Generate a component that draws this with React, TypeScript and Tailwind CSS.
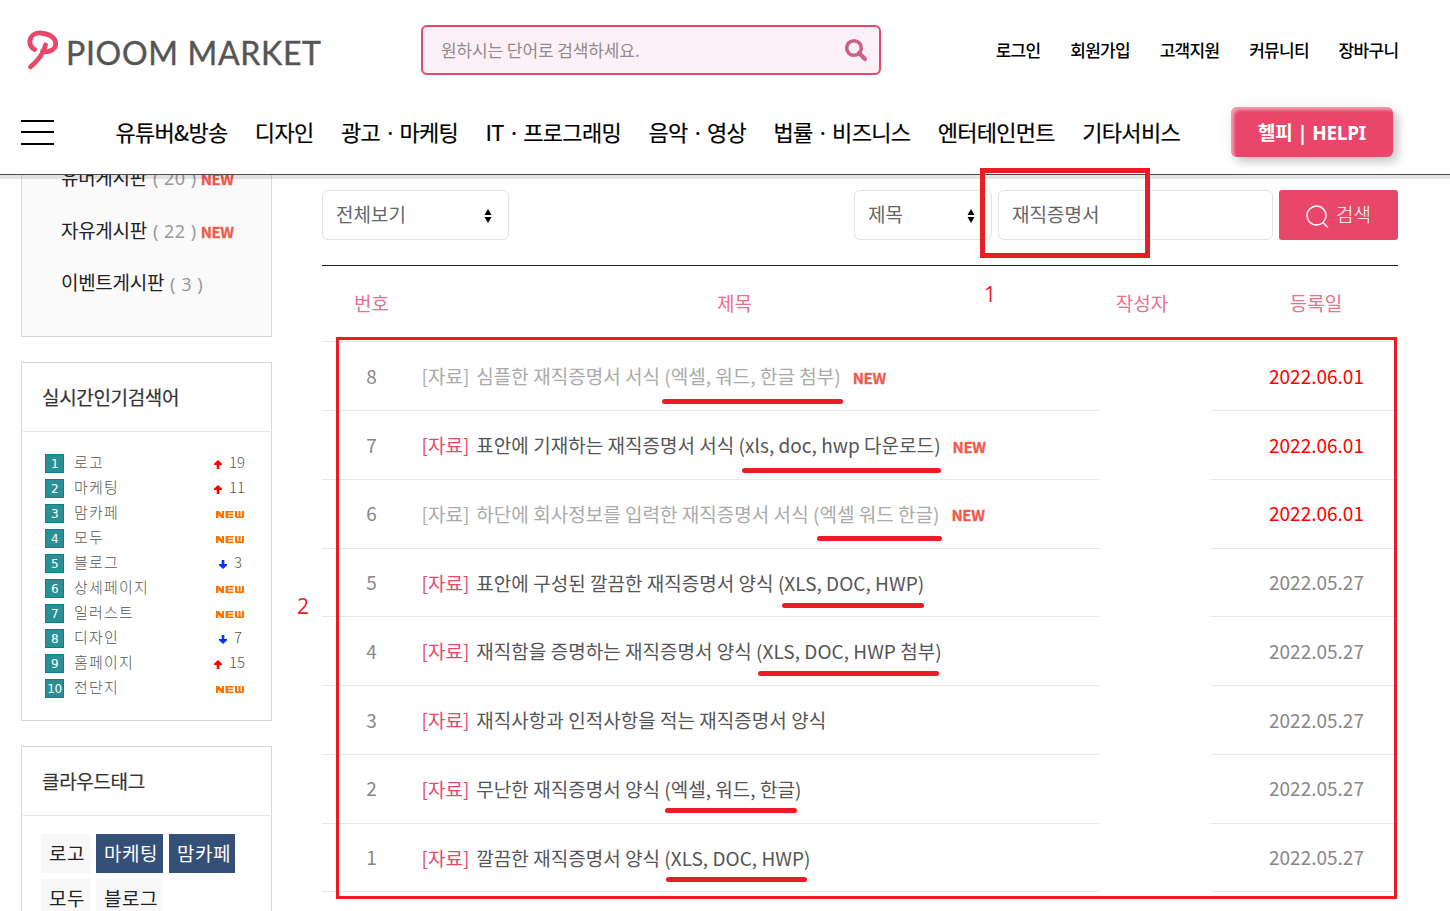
import { clsx } from "clsx";

const topLinks = ["로그인", "회원가입", "고객지원", "커뮤니티", "장바구니"];

const navItems = [
  "유튜버&방송",
  "디자인",
  "광고ㆍ마케팅",
  "ITㆍ프로그래밍",
  "음악ㆍ영상",
  "법률ㆍ비즈니스",
  "엔터테인먼트",
  "기타서비스",
];

const boards = [
  { name: "유머게시판", count: 20, isNew: true },
  { name: "자유게시판", count: 22, isNew: true },
  { name: "이벤트게시판", count: 3, isNew: false },
];

type Keyword = { word: string; trend: "up" | "down" | "new"; diff?: number };

const keywords: Keyword[] = [
  { word: "로고", trend: "up", diff: 19 },
  { word: "마케팅", trend: "up", diff: 11 },
  { word: "맘카페", trend: "new" },
  { word: "모두", trend: "new" },
  { word: "블로그", trend: "down", diff: 3 },
  { word: "상세페이지", trend: "new" },
  { word: "일러스트", trend: "new" },
  { word: "디자인", trend: "down", diff: 7 },
  { word: "홈페이지", trend: "up", diff: 15 },
  { word: "전단지", trend: "new" },
];

const tags = [
  { label: "로고", active: false, width: "w-[49px]" },
  { label: "마케팅", active: true, width: "w-[67px]" },
  { label: "맘카페", active: true, width: "w-[66px]" },
  { label: "모두", active: false, width: "w-[49px]" },
  { label: "블로그", active: false, width: "w-[67px]" },
];

const posts = [
  { no: 8, title: "심플한 재직증명서 서식 (엑셀, 워드, 한글 첨부)", date: "2022.06.01", isNew: true, visited: true },
  { no: 7, title: "표안에 기재하는 재직증명서 서식 (xls, doc, hwp 다운로드)", date: "2022.06.01", isNew: true, visited: false },
  { no: 6, title: "하단에 회사정보를 입력한 재직증명서 서식 (엑셀 워드 한글)", date: "2022.06.01", isNew: true, visited: true },
  { no: 5, title: "표안에 구성된 깔끔한 재직증명서 양식 (XLS, DOC, HWP)", date: "2022.05.27", isNew: false, visited: false },
  { no: 4, title: "재직함을 증명하는 재직증명서 양식 (XLS, DOC, HWP 첨부)", date: "2022.05.27", isNew: false, visited: false },
  { no: 3, title: "재직사항과 인적사항을 적는 재직증명서 양식", date: "2022.05.27", isNew: false, visited: false },
  { no: 2, title: "무난한 재직증명서 양식 (엑셀, 워드, 한글)", date: "2022.05.27", isNew: false, visited: false },
  { no: 1, title: "깔끔한 재직증명서 양식 (XLS, DOC, HWP)", date: "2022.05.27", isNew: false, visited: false },
];

const Header = () => (
  <header className="relative z-10 h-[175px] border-b border-[#4d4d4d] bg-white shadow-[0_4px_0_rgba(0,0,0,0.1)]">
    <div className="flex h-[100px] items-center pr-[51.500px] pl-[27px]">
      <a className="flex w-[394px] items-center">
        <svg className="h-[42px] w-[32px]" viewBox="0 0 32 42" fill="none" stroke="#e8476a" strokeWidth="4.8" strokeLinecap="round" strokeLinejoin="round">
          <path d="M7.500 20.500C3.500 18 2.500 14.500 3 11.500C4 6 9 3.700 13.500 4C22 4.500 29 8.500 28.700 15C28.500 21 22 23.500 15.500 22.500" />
          <path d="M18.500 16C16.500 25 10.500 32 3.500 38" />
        </svg>
        <span className="mt-[6px] ml-[7px] font-['Lato'] text-[32px] leading-none tracking-[0.700px] whitespace-nowrap text-[#555] [-webkit-text-stroke:0.4px_#555]">PIOOM MARKET</span>
      </a>
      <div className="flex h-[50px] w-[460px] items-center justify-between rounded-md border-2 border-[#e8476a] bg-[#fdf0f7] pr-[11px] pl-[18px]">
        <span className="text-[17px] tracking-[-0.100px] text-[#8f8b8e]">원하시는 단어로 검색하세요.</span>
        <svg className="h-6 w-6" viewBox="0 0 24 24" fill="none" stroke="#c9638a" strokeWidth="3.600">
          <circle cx="10" cy="10" r="7.300" />
          <path d="M15 15l6 6" strokeWidth="4.200" strokeLinecap="round" />
        </svg>
      </div>
      <nav className="ml-auto flex gap-[29.600px] text-[17px] font-medium tracking-[-0.670px] text-black">
        {topLinks.map((link) => (
          <a key={link}>{link}</a>
        ))}
      </nav>
    </div>

    <div className="flex h-16 items-center pl-[21px]">
      <div className="flex w-[33px] flex-col gap-[9.500px]">
        <span className="h-0.5 bg-black" />
        <span className="h-0.5 bg-black" />
        <span className="h-0.5 bg-black" />
      </div>
      <nav className="ml-[61.500px] flex w-[1064.500px] justify-between pb-px text-[22px] tracking-[-0.700px] whitespace-nowrap text-black [-webkit-text-stroke:0.2px_#000]">
        {navItems.map((item) => (
          <a key={item}>{item}</a>
        ))}
      </nav>
      <a className="ml-[51px] flex h-[50px] w-[162px] items-center justify-center rounded-md bg-[#e8476a] pt-0.5 font-['Noto_Sans','Noto_Sans_CJK_KR',sans-serif] text-[19px] font-bold tracking-[-0.250px] text-white shadow-[inset_3px_3px_3px_rgba(255,255,255,0.45),5px_5px_10px_rgba(0,0,0,0.2),0_0_20px_rgba(0,0,0,0.05)]">
        헬피 | HELPI
      </a>
    </div>
  </header>
);

const TrendMark = ({ trend, diff }: Keyword) => {
  if (trend === "new") {
    return (
      <svg className="mt-0.5 mr-px h-[7px] w-[28px]" viewBox="0 0 28 7" fill="#ff7200">
        <path d="M0 0H3L6 3.500V0H8V7H5.500L2.300 3.500V7H0Z" />
        <path d="M9.500 0H17.500V1.600H12V2.800H17V4.200H12V5.400H17.500V7H9.500Z" />
        <path d="M19 0H21.200V5.400H22.600V0H24.600V5.400H26V0H28V6L27 7H20L19 6Z" />
      </svg>
    );
  }
  return (
    <>
      <svg className={clsx("mt-0.5 h-[9px] w-2", trend === "down" && "rotate-180")} viewBox="0 0 8 9" fill={trend === "up" ? "#f00" : "#0a32ff"}>
        <path d="M4 0L8 3.800V5H5.300V9H2.700V5H0V3.800Z" />
      </svg>
      <span className={clsx("ml-[7px] pb-px", trend === "down" && "mr-[3px]")}>{diff}</span>
    </>
  );
};

const Sidebar = () => (
  <aside className="flex w-[251px] flex-col gap-[25px]">
    <section className="h-[177px] border border-[#d9d9d9] bg-[#fafafa] pl-[39px]">
      <div className="-mt-[10px]">
        {boards.map((board) => (
          <div key={board.name} className="flex h-[52.700px] items-center whitespace-nowrap">
            <span className="text-[19px] tracking-[-0.300px] text-[#222]">{board.name}</span>
            <span className="mt-0.5 ml-[6px] font-['Noto_Sans'] text-lg tracking-[0.500px] text-[#999]">( {board.count} )</span>
            {board.isNew && <b className="mt-[4px] ml-[4px] text-[15px] tracking-[-0.400px] text-[#f05a4a] [-webkit-text-stroke:0.3px_#f05a4a]">NEW</b>}
          </div>
        ))}
      </div>
    </section>

    <section className="h-[359px] border border-[#d9d9d9] px-px">
      <h3 className="flex h-[69px] items-center border-b border-[#e5e5e5] pl-[19px] text-[19px] tracking-[-0.350px] text-[#333] [-webkit-text-stroke:0.2px_#333]">실시간인기검색어</h3>
      <ol className="pt-[19px] pr-[25px] pl-[22px] text-[15px] text-[#555]">
        {keywords.map((item, i) => (
          <li key={item.word} className="flex h-[25px] items-center">
            <span className="flex h-[19px] w-[19px] items-center justify-center border border-[#0a7f86] bg-[#2b9096] font-['DejaVu_Sans'] text-[12px] tracking-[-0.500px] text-white">{i + 1}</span>
            <span className="ml-[10px] pb-0.5 font-light tracking-[1.200px]">{item.word}</span>
            <span className="ml-auto flex items-center pb-px font-light">
              <TrendMark {...item} />
            </span>
          </li>
        ))}
      </ol>
    </section>

    <section className="h-[300px] border border-[#d9d9d9] px-px">
      <h3 className="flex h-[69px] items-center border-b border-[#e5e5e5] pl-[19px] text-[19px] tracking-[-0.350px] text-[#333] [-webkit-text-stroke:0.2px_#333]">클라우드태그</h3>
      <div className="flex flex-wrap gap-1.5 pt-[18px] pl-[18px]">
        {tags.map((tag) => (
          <a key={tag.label} className={clsx("flex h-[39px] items-center pl-2 text-[19px] tracking-[0.500px] whitespace-nowrap", tag.width, tag.active ? "bg-[#355078] text-white" : "bg-[#f8f8f8] text-[#222]")}>
            {tag.label}
          </a>
        ))}
      </div>
    </section>
  </aside>
);

const SelectArrows = () => (
  <svg className="mt-0.5 h-[14px] w-2" viewBox="0 0 8 14" fill="#000">
    <path d="M4 0L7.500 6H0.500ZM4 14L7.500 8H0.500Z" />
  </svg>
);

const SearchBar = () => (
  <div className="flex h-[50px] text-[19px] text-[#666]">
    <div className="flex w-[187px] items-center justify-between rounded-md border border-[#e3e3e3] pr-4 pl-[13px]">
      <span className="pb-px">전체보기</span>
      <SelectArrows />
    </div>
    <div className="ml-auto flex w-[138px] items-center justify-between rounded-md border border-[#e3e3e3] pr-4 pl-[13px]">
      <span className="pb-px">제목</span>
      <SelectArrows />
    </div>
    <div className="ml-1.5 flex w-[275px] items-center rounded-md border border-[#e3e3e3] pb-px pl-[13px]">재직증명서</div>
    <button className="ml-1.5 flex w-[119px] items-center justify-center rounded-[3px] bg-[#e8476a] text-white">
      <svg className="mt-0.5 h-[23px] w-[23px]" viewBox="0 0 23 23" fill="none" stroke="currentColor" strokeWidth="1.500">
        <circle cx="10.500" cy="10.500" r="9.500" />
        <path d="M17 17.500l5 5" />
      </svg>
      <span className="ml-[7px] pb-px font-light">검색</span>
    </button>
  </div>
);

const PostTable = () => (
  <div className="mt-[25px] border-t border-[#222] text-[19px]">
    <div className="flex h-[76.250px] items-center border-b border-[#e8e8e8] pb-px text-center text-[#e8708c]">
      <span className="w-[99px]">번호</span>
      <span className="w-[627px]">제목</span>
      <span className="ml-[51px] w-[86px]">작성자</span>
      <span className="ml-[49px] w-[164px]">등록일</span>
    </div>
    {posts.map((post) => (
      <div key={post.no} className="flex h-[68.750px] text-[#888]">
        <div className="flex w-[99px] items-center justify-center border-b border-[#e8e8e8]">{post.no}</div>
        <div className={clsx("flex w-[678px] items-center border-b border-[#e8e8e8] pt-px pl-[0.500px] whitespace-nowrap", post.visited ? "text-[#aaa]" : "text-[#555]")}>
          <span className={clsx(!post.visited && "text-[#e8476a]")}>[자료]</span>
          <span className="ml-[7px] tracking-[0.030px]">{post.title}</span>
          {post.isNew && <b className="mt-[3px] ml-[12px] text-[15px] tracking-[-0.400px] text-[#f05a4a] [-webkit-text-stroke:0.3px_#f05a4a]">NEW</b>}
        </div>
        <div className="w-28" />
        <div className={clsx("flex flex-1 items-center justify-center border-b border-[#e8e8e8] pl-6", post.isNew && "text-[#f00]")}>{post.date}</div>
      </div>
    ))}
  </div>
);

/* Red guide marks drawn over the page */
const Annotations = () => (
  <div className="pointer-events-none absolute inset-0 z-20 font-['Open_Sans'] text-[21px] leading-none text-[#ed1c24]">
    <div className="absolute top-[168px] left-[980px] h-[90px] w-[170px] border-5 border-[#ed1c24]" />
    <div className="absolute top-[337px] left-[336px] h-[562px] w-[1061px] border-3 border-[#ed1c24]" />
    <span className="absolute top-[284px] left-[984px]">1</span>
    <span className="absolute top-[596px] left-[297px]">2</span>
    <div className="absolute top-[399px] left-[662px] h-[5px] w-[181px] rounded-full bg-[#ed1c24]" />
    <div className="absolute top-[468px] left-[742px] h-[5px] w-[199px] rounded-full bg-[#ed1c24]" />
    <div className="absolute top-[536px] left-[817px] h-[5px] w-[125px] rounded-full bg-[#ed1c24]" />
    <div className="absolute top-[603px] left-[782px] h-[5px] w-[142px] rounded-full bg-[#ed1c24]" />
    <div className="absolute top-[671px] left-[758px] h-[5px] w-[181px] rounded-full bg-[#ed1c24]" />
    <div className="absolute top-[808px] left-[665px] h-[5px] w-[132px] rounded-full bg-[#ed1c24]" />
    <div className="absolute top-[877px] left-[666px] h-[5px] w-[141px] rounded-full bg-[#ed1c24]" />
  </div>
);

export default function App() {
  return (
    <div className="relative h-[911px] w-[1450px] overflow-hidden bg-white font-['Noto_Sans_CJK_KR',sans-serif]">
      <Header />
      <main className="-mt-[15px] flex items-start pl-[21px]">
        <Sidebar />
        <div className="mt-[30px] ml-[50px] w-[1076px]">
          <SearchBar />
          <PostTable />
        </div>
      </main>
      <Annotations />
    </div>
  );
}
